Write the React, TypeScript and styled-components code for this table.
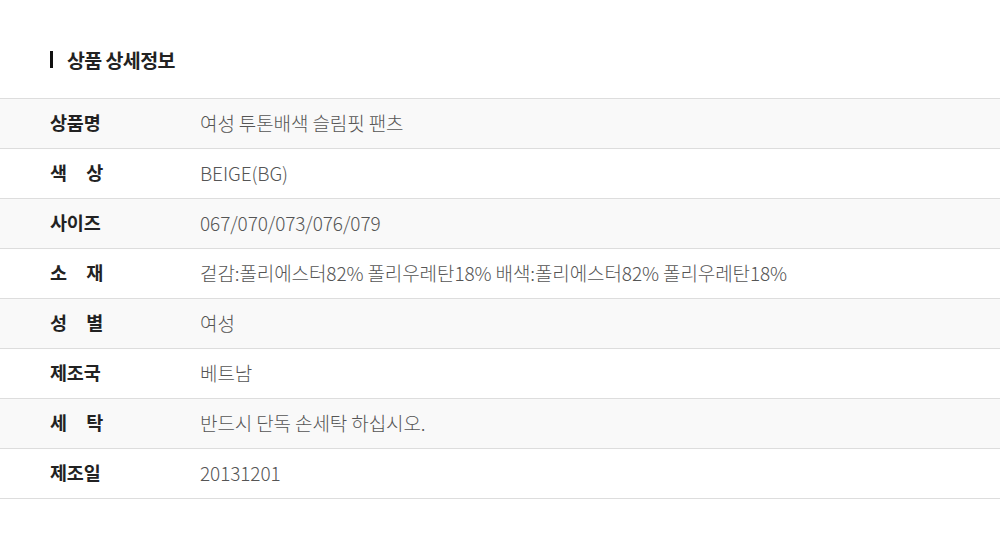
import { createGlobalStyle } from 'styled-components';
import styled from 'styled-components';

const GlobalStyle = createGlobalStyle`
  body {
    margin: 0;
    background: #fff;
    font-family: "Noto Sans CJK KR", "Noto Sans", sans-serif;
  }
`;

const Wrap = styled.div`
  width: 1000px;
  padding-top: 47px;
`;

const Title = styled.h2`
  display: flex;
  align-items: center;
  gap: 14px;
  margin: 0 0 0 50px;
  height: 24px;
  font-size: 19.5px;
  font-weight: 700;
  color: #222;
  letter-spacing: -0.6px;

  &::before {
    content: '';
    width: 3px;
    height: 17px;
    background: #111;
  }
`;

const Table = styled.div`
  margin-top: 27px;
  border-top: 1px solid #ddd;
`;

const Row = styled.div<{ $shaded: boolean }>`
  display: flex;
  align-items: center;
  height: 50px;
  box-sizing: border-box;
  border-bottom: 1px solid #ddd;
  background: ${(p) => (p.$shaded ? '#f9f9f9' : '#fff')};
`;

const Label = styled.div`
  width: 53px;
  margin-left: 50px;
  margin-right: 97px;
  margin-top: -3px;
  font-size: 18.5px;
  font-weight: 700;
  color: #222;
  letter-spacing: -0.2px;
  text-align: justify;
  text-align-last: justify;
  white-space: nowrap;
`;

const Value = styled.div`
  margin-top: -3px;
  font-size: 19px;
  font-weight: 300;
  color: #555;
  letter-spacing: -0.1px;
  white-space: nowrap;
`;

const rows = [
  { label: '상품명', value: '여성 투톤배색 슬림핏 팬츠' },
  { label: '색 상', value: 'BEIGE(BG)' },
  { label: '사이즈', value: '067/070/073/076/079' },
  { label: '소 재', value: '겉감:폴리에스터82% 폴리우레탄18% 배색:폴리에스터82% 폴리우레탄18%' },
  { label: '성 별', value: '여성' },
  { label: '제조국', value: '베트남' },
  { label: '세 탁', value: '반드시 단독 손세탁 하십시오.' },
  { label: '제조일', value: '20131201' },
];

export default function App() {
  return (
    <>
      <GlobalStyle />
      <Wrap>
        <Title>상품 상세정보</Title>
        <Table>
          {rows.map((r, i) => (
            <Row key={r.label} $shaded={i % 2 === 0}>
              <Label>{r.label}</Label>
              <Value>{r.value}</Value>
            </Row>
          ))}
        </Table>
      </Wrap>
    </>
  );
}
